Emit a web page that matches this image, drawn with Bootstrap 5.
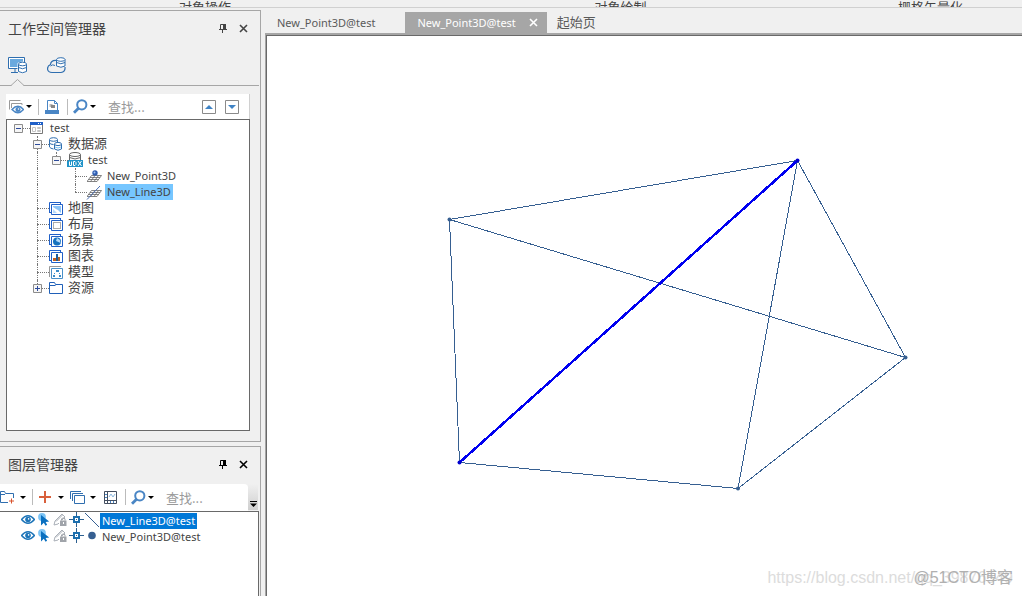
<!DOCTYPE html>
<html lang="zh-CN">
<head>
<meta charset="utf-8">
<meta name="viewport" content="width=device-width, initial-scale=1">
<title>工作空间管理器</title>
<link href="https://cdn.jsdelivr.net/npm/bootstrap@5.3.0/dist/css/bootstrap.min.css" rel="stylesheet">
<script src="https://cdn.jsdelivr.net/npm/bootstrap@5.3.0/dist/js/bootstrap.bundle.min.js"></script>
<style>
  body { background:#f0f0f0; color:#444; font:11px/16px "Noto Sans","Noto Sans CJK SC",sans-serif; }
  .cjk { font-family:"Noto Sans CJK SC",sans-serif; font-size:13px; }
  svg { display:block; flex:none; }
  button { border:0; background:none; padding:0; color:inherit; display:flex; align-items:center; flex:none; }
  .ribbon { display:grid; grid-template-columns:416fr 409fr 197fr; height:8px; border-bottom:1px solid #d0d0d0; overflow:hidden; }
  .ribbon-group { display:flex; align-items:flex-end; justify-content:center; line-height:14px; padding-bottom:3px; }
  .ribbon-group:first-child { padding-right:6px; }
  .ribbon-group:last-child { padding-left:14px; }
  .side { width:261px; flex:none; padding-top:2px; gap:4px; }
  .pane { border:1px solid #a6a6a6; border-left:0; min-height:0; display:flex; flex-direction:column; }
  .pane-top { flex:432 1 0; }
  .pane-bottom { flex:150 1 0; border-bottom:0; }
  .pane-title { height:36px; padding:0 12px 2px 8px; flex:none; }
  .pane-bottom .pane-title { height:37px; }
  .pane-title h2 { font-size:14px; line-height:20px; font-weight:400; margin:0; font-family:"Noto Sans CJK SC",sans-serif; }
  .dark { color:#000; }
  .views { position:relative; height:39px; padding:0 0 2px 8px; gap:20px; border-bottom:1px solid #a6a6a6; margin-right:1px; flex:none; }
  .views .notch { position:absolute; left:11px; bottom:-1px; }
  .tools { background:#fff; flex:none; }
  .tools-a { height:25px; margin:8px 10px 0 6px; padding-left:3px; border-right:1px solid #d0d0d0; }
  .tools-b { height:27px; margin-right:2px; background:#f0f0f0; }
  .tools-b .strip { background:#fff; border-radius:0 4px 0 0; min-width:0; }
  .sep { width:1px; height:16px; background:#bbb; flex:none; }
  .find { border:0; outline:0; padding:0; background:none; min-width:0; width:0; flex:1; height:20px; color:#444; margin-left:12px; }
  .find::placeholder { color:#999; opacity:1; }
  .more { width:10px; height:26px; background:linear-gradient(#f0f0f0,#cfcfcf); align-items:flex-end; justify-content:center; padding-bottom:3px; }
  .tree-box { border:1px solid #696969; background:#fff; margin:0 10px 10px 6px; padding-left:2px; flex:1; min-height:0; overflow:hidden; }
  .tree-box ul, .layers { list-style:none; margin:0; padding:0; }
  .node { display:flex; align-items:flex-start; height:16px; }
  .label { padding:0 2px; line-height:16px; white-space:nowrap; margin-left:1px; }
  .label.cjk { line-height:14px; padding:0 1px; }
  .picked { background:#76c6ff; }
  .cell { width:19px; height:16px; position:relative; flex:none; display:block; }
  .ln::before { content:""; position:absolute; left:9px; top:0; height:16px; border-left:1px dotted #777; }
  .half::before { height:8px; }
  .to::after { content:""; position:absolute; left:9px; right:-2px; top:8px; border-top:1px dotted #777; }
  .cell svg { position:absolute; left:5px; top:4px; z-index:1; }
  .layers { flex:1; background:#fff; border-top:1px solid #696969; border-right:1px solid #696969; margin-right:1px; padding-left:21px; }
  .layers li { display:flex; align-items:center; height:16px; }
  .layers .label { margin:2px 0 0 1px; }
  .chosen { background:#0078d7; color:#fff; }
  .docs { min-width:0; margin-left:4px; }
  .doc-tabs { height:25px; padding-top:4px; }
  .doc-tab { color:#5a5a5a; height:21px; }
  .doc-tab.cjk { padding-bottom:2px; }
  .doc-tab.on { background:#a6a6a6; color:#fff; }
  .paper { position:relative; border-top:2px solid #a6a6a6; border-left:1px solid #a6a6a6; flex:1; min-height:0; }
  .sheet { border-top:1px solid #696969; border-left:1px solid #696969; background:#fff; height:100%; }
  .credit { position:absolute; right:9px; bottom:8px; display:grid; justify-items:end; align-items:center; white-space:nowrap; }
  .credit span { grid-area:1/1; }
  .link-mark { font:16px/20px "Liberation Sans",sans-serif; color:#dcdcdc; }
  .blog-mark { font:16px/20px "Liberation Sans","Noto Sans CJK SC",sans-serif; color:#b0b0b0; }
</style>
</head>
<body class="vh-100 d-flex flex-column overflow-hidden">

<svg width="0" height="0" class="position-absolute" aria-hidden="true">
  <symbol id="drop" viewBox="0 0 6 3"><path d="M0 0h6L3 3z" fill="#000"/></symbol>
  <symbol id="pin" viewBox="0 0 8 9"><path d="M1.5 0.5h5v5h-5z" fill="none" stroke="currentColor"/><path d="M4 0h3v6H4zM0 5h8v1H0zM3 6h1v3H3z" fill="currentColor"/></symbol>
  <symbol id="shut" viewBox="0 0 9 9"><path d="M1 1l7 7M8 1L1 8" stroke="currentColor" stroke-width="1.6"/></symbol>
  <symbol id="lens" viewBox="0 0 15 15"><circle cx="8.8" cy="5.8" r="4.6" fill="none" stroke="#4a86c5" stroke-width="2"/><path d="M5.5 9.3L1 13.8" stroke="#4a86c5" stroke-width="2.8"/></symbol>
  <symbol id="minus" viewBox="0 0 9 9"><path d="M.5.5h8v8h-8z" fill="#f6f6f6" stroke="#8c8c8c"/><path d="M2 4.5h5" stroke="#2d4b9b"/></symbol>
  <symbol id="plus" viewBox="0 0 9 9"><path d="M.5.5h8v8h-8z" fill="#f6f6f6" stroke="#8c8c8c"/><path d="M2 4.5h5M4.5 2v5" stroke="#2d4b9b"/></symbol>
  <symbol id="pages" viewBox="0 0 14 13"><path d="M.5 10.500V.5h11" fill="none" stroke="#2060c8"/><path d="M11.500 0v2M0 10.500h2" stroke="#2060c8"/><path d="M2.500 2.500h11v10h-11z" fill="#fff" stroke="#2060c8"/></symbol>
  <symbol id="eye" viewBox="0 0 14 9"><path d="M.5 4.500Q7-3 13.500 4.500Q7 12 .5 4.500z" fill="#fff" stroke="#1c74b8" stroke-width="1.500"/><circle cx="7" cy="4.500" r="2.800" fill="#1c74b8"/><circle cx="7.600" cy="3.900" r=".8" fill="#fff"/></symbol>
  <symbol id="arrow" viewBox="0 0 12 13"><circle cx="4" cy="4" r="3.900" fill="#7cc4f5"/><path d="M3 2v10.500l2.800-2.700 1.800 3 1.500-1-1.500-2.800 3.600-.5z" fill="#0a70c0"/></symbol>
  <symbol id="editlock" viewBox="0 0 14 13"><path d="M1 12l1-4 7-7 3 3-3 3M1 12l4-1 1-1M3 8.500L9.500 2" fill="none" stroke="#aab0b8"/><path d="M7 7.500h6.500V13H7z" fill="#a0a4aa"/><path d="M8.500 7.500V5.800Q10.300 4 12 5.800v1.700" fill="none" stroke="#a0a4aa"/><path d="M10 9h1v2h-1z" fill="#fff"/></symbol>
  <symbol id="snap" viewBox="0 0 15 15"><path d="M7.500 0v15M0 7.500h15" stroke="#2c5f8f"/><path d="M5 5h5v5H5z" fill="#fff" stroke="#1c6fae" stroke-width="2"/><path d="M7 7h1v1H7z" fill="#2c5f8f"/></symbol>
  <symbol id="grid3d" viewBox="0 0 15 13"><path d="M4.500 6.500h10L10 12.500H0zM3 8.500h10M1.500 10.500h10M8 6.500L3.500 12.500M11.500 6.500L7 12.500" fill="none" stroke="#666" stroke-width=".8"/></symbol>
</svg>

<header class="ribbon cjk">
  <div class="ribbon-group">对象操作</div>
  <div class="ribbon-group">对象绘制</div>
  <div class="ribbon-group">栅格矢量化</div>
</header>

<div class="d-flex flex-grow-1" style="min-height:0">
  <aside class="side d-flex flex-column">
    <section class="pane pane-top">
      <div class="pane-title d-flex align-items-center">
        <h2 class="me-auto">工作空间管理器</h2>
        <button aria-label="固定" class="me-2"><svg width="8" height="9"><use href="#pin"/></svg></button>
        <button aria-label="关闭" class="ms-1"><svg width="9" height="9"><use href="#shut"/></svg></button>
      </div>
      <div class="views d-flex align-items-center">
        <button aria-label="工作空间"><svg width="19" height="17" viewBox="0 0 19 17"><path d="M.5.5h16v11H.5z" fill="#fff" stroke="#2f6eaf"/><path d="M2 2h13v8H2z" fill="#6aa9de"/><path d="M3 15.500h7M7 12v3" stroke="#2f6eaf"/><path d="M9.500 6q4.800-3 9.500 0v9q-4.800 3-9.500 0z" fill="#fff"/><path d="M10.500 7v7.500q4 2.500 8 0V7" fill="none" stroke="#2f6eaf"/><ellipse cx="14.500" cy="7" rx="4" ry="1.800" fill="#fff" stroke="#2f6eaf"/><path d="M10.500 10.500q4 2.500 8 0" fill="none" stroke="#2f6eaf"/></svg></button>
        <button aria-label="云数据"><svg width="19" height="17" viewBox="0 0 19 17"><path d="M9.500 3.500Q4 3 3.500 7.500Q.5 8.500.5 12Q1 15.500 5 15.500h9Q18.500 15 18 10" fill="none" stroke="#2f6eaf" stroke-width="1.200"/><path d="M3.500 9Q5.500 7 8 8.500" fill="none" stroke="#2f6eaf"/><path d="M9.500 2.500v6.500q4.500 2.500 8.500 0V2.500" fill="#fff" stroke="#2f6eaf"/><ellipse cx="13.800" cy="2.500" rx="4.200" ry="1.800" fill="#fff" stroke="#2f6eaf"/><path d="M9.500 5.500q4.500 2.500 8.500 0" fill="none" stroke="#2f6eaf"/></svg></button>
        <svg class="notch" width="13" height="7" viewBox="0 0 13 7"><path d="M0 7L6.500.5 13 7z" fill="#f0f0f0"/><path d="M0 6.500L6.500.5 13 6.500" fill="none" stroke="#a6a6a6"/></svg>
      </div>
      <div class="tools tools-a d-flex align-items-center">
        <button aria-label="显示" style="gap:2px"><svg width="15" height="14" viewBox="0 0 15 14"><path d="M.5 9.500V.5h11M2.500 8V3.500h10.500V5" fill="none" stroke="#999"/><path d="M3 9.500Q9 3 14.500 9.500Q9 16 3 9.500z" fill="#fff" stroke="#4a86c5" stroke-width="1.400"/><circle cx="9" cy="9.500" r="2.500" fill="#4a86c5"/><circle cx="9.500" cy="9" r=".8" fill="#fff"/></svg><svg width="6" height="3"><use href="#drop"/></svg></button>
        <span class="sep" style="margin:0 6px"></span>
        <button aria-label="保存"><svg width="14" height="14" viewBox="0 0 14 14"><path d="M2.500 10V.5h7l3 3V10" fill="#fff" stroke="#4a86c5"/><path d="M9.500.5v3h3" fill="none" stroke="#4a86c5"/><path d="M0 10h14v4H0z" fill="#4a86c5"/><path d="M4.500 4h3v3h-3z" fill="#bbb"/><path d="M6 5h4v3H6z" fill="#888"/></svg></button>
        <span class="sep ms-2" style="margin-right:5px"></span>
        <button aria-label="查找" style="gap:2px"><svg width="15" height="15"><use href="#lens"/></svg><svg width="6" height="3"><use href="#drop"/></svg></button>
        <input class="find cjk" type="text" placeholder="查找..." aria-label="查找">
        <button aria-label="上一个" style="margin-right:9px"><svg width="14" height="14" viewBox="0 0 14 14"><path d="M.5.500h13v13H.5z" fill="#fff" stroke="#8a8a8a"/><path d="M3 9h8L7 5z" fill="#3f83c5"/></svg></button>
        <button aria-label="下一个" style="margin-right:10px"><svg width="14" height="14" viewBox="0 0 14 14"><path d="M.5.500h13v13H.5z" fill="#fff" stroke="#8a8a8a"/><path d="M3 5h8L7 9z" fill="#3f83c5"/></svg></button>
      </div>
      <div class="tree-box">
        <ul>
          <li class="node"><span class="cell to"><svg width="9" height="9"><use href="#minus"/></svg></span>
            <svg width="19" height="16" viewBox="0 0 19 16"><path d="M2.500 2.500h12v11h-12z" fill="#fff" stroke="#777"/><path d="M2 2h13v3H2z" fill="#2060c8"/><path d="M10 3h1v1h-1zM12 3h1v1h-1z" fill="#fff"/><path d="M4.500 7.500h3v4h-3zM9.500 7.500h3v1h-3zM9.500 10.500h3v1h-3z" fill="none" stroke="#c4c4c4"/></svg><span class="label">test</span></li>
          <li class="node"><span class="cell"></span><span class="cell ln to"><svg width="9" height="9"><use href="#minus"/></svg></span>
            <svg width="19" height="16" viewBox="0 0 19 16"><g fill="#fff" stroke="#2f6eaf"><path d="M2.500 4v7q1 1.500 4 2M10.500 4v2" fill="none"/><ellipse cx="6.500" cy="3.500" rx="4" ry="1.800"/><path d="M2.500 7q1 1.500 4 1.500" fill="none"/><path d="M7.500 8v5q3.500 2.500 7 0V8"/><ellipse cx="11" cy="8" rx="3.500" ry="1.600"/></g><path d="M8 11q3 2 6 0" fill="none" stroke="#7cc4f5"/></svg><span class="label cjk">数据源</span></li>
          <li class="node"><span class="cell"></span><span class="cell ln"></span><span class="cell ln half to"><svg width="9" height="9"><use href="#minus"/></svg></span>
            <svg width="19" height="16" viewBox="0 0 19 16"><path d="M3.500 2.500v7h11v-7" fill="#fff" stroke="#666"/><ellipse cx="9" cy="2.500" rx="5.500" ry="2" fill="#fff" stroke="#666"/><path d="M3.500 5.500q5.500 3 11 0" fill="none" stroke="#666"/><path d="M1 8h16v7H1z" fill="#2093c8"/><path d="M3.500 9.500v4h2v-4M7.500 9.500v4h1.500l1-1v-2l-1-1zM12 9l3.500 5M15.500 9L12 14" fill="none" stroke="#fff"/></svg><span class="label">test</span></li>
          <li class="node"><span class="cell"></span><span class="cell ln"></span><span class="cell"></span><span class="cell ln to"></span>
            <svg width="19" height="16" viewBox="0 0 19 16"><use href="#grid3d" x="2" y="1" width="15" height="13"/><circle cx="10" cy="5" r="2.700" fill="#2f5db0"/><circle cx="9.500" cy="4.500" r="1" fill="#9cc0f0"/></svg><span class="label">New_Point3D</span></li>
          <li class="node"><span class="cell"></span><span class="cell ln"></span><span class="cell"></span><span class="cell ln half to"></span>
            <svg width="19" height="16" viewBox="0 0 19 16"><use href="#grid3d" x="2" y="0" width="15" height="13"/><path d="M2 15.500L15 2" stroke="#4a6fb5"/></svg><span class="label picked">New_Line3D</span></li>
          <li class="node"><span class="cell"></span><span class="cell ln to"></span>
            <svg width="19" height="16" viewBox="0 0 19 16"><use href="#pages" x="2" y="2" width="14" height="13"/><path d="M6 6h8v7l-3-3-2-1-3-2z" fill="#8cc4f8"/><path d="M6 9l4 4H6z" fill="#b5dafc"/></svg><span class="label cjk">地图</span></li>
          <li class="node"><span class="cell"></span><span class="cell ln to"></span>
            <svg width="19" height="16" viewBox="0 0 19 16"><use href="#pages" x="2" y="2" width="14" height="13"/><path d="M6.500 6.500h7v6h-7z" fill="none" stroke="#555" stroke-dasharray="1 1"/></svg><span class="label cjk">布局</span></li>
          <li class="node"><span class="cell"></span><span class="cell ln to"></span>
            <svg width="19" height="16" viewBox="0 0 19 16"><use href="#pages" x="2" y="2" width="14" height="13"/><circle cx="10" cy="9.500" r="4" fill="#1672be"/><path d="M9 9l1-3 3 2 .5 3-2-1z" fill="#b5dafc"/></svg><span class="label cjk">场景</span></li>
          <li class="node"><span class="cell"></span><span class="cell ln to"></span>
            <svg width="19" height="16" viewBox="0 0 19 16"><use href="#pages" x="2" y="2" width="14" height="13"/><path d="M6 10h3v3H6z" fill="#c06020"/><path d="M9 6h2v7H9z" fill="#1c5c9c"/><path d="M11 9h2v4h-2z" fill="#b0662c"/></svg><span class="label cjk">图表</span></li>
          <li class="node"><span class="cell"></span><span class="cell ln to"></span>
            <svg width="19" height="16" viewBox="0 0 19 16"><path d="M2.500 13V2.500H14" fill="none" stroke="#999"/><path d="M4.500 4.500h11v10h-11z" fill="#fff" stroke="#4a90c8"/><path d="M9 6h3v2H9zM6 11h2v2H6zM12 11h2v2h-2zM7 9h1v1H7zM12 9h1v1h-1z" fill="#3c8cc8"/></svg><span class="label cjk">模型</span></li>
          <li class="node"><span class="cell"></span><span class="cell ln half to"><svg width="9" height="9"><use href="#plus"/></svg></span>
            <svg width="19" height="16" viewBox="0 0 19 16"><path d="M2.500 13.500v-11h5l1 2h7v9zM2.500 5.500h6" fill="#fff" stroke="#2060b8"/></svg><span class="label cjk">资源</span></li>
        </ul>
      </div>
    </section>

    <section class="pane pane-bottom">
      <div class="pane-title d-flex align-items-center">
        <h2 class="me-auto">图层管理器</h2>
        <button aria-label="固定" class="me-2 dark"><svg width="8" height="9"><use href="#pin"/></svg></button>
        <button aria-label="关闭" class="ms-1 dark"><svg width="9" height="9"><use href="#shut"/></svg></button>
      </div>
      <div class="tools tools-b d-flex">
        <div class="strip d-flex align-items-center flex-grow-1">
          <button aria-label="新建分组" style="gap:6px"><svg width="14" height="14" viewBox="0 0 14 14"><path d="M8 12.500H.5V1.500h4l1 2h8V8M0 4.500h5" fill="none" stroke="#2f6eaf"/><path d="M11.500 8.500v5M9 11h5" stroke="#d9532c"/></svg><svg width="6" height="3"><use href="#drop"/></svg></button>
          <span class="sep" style="margin:0 6px"></span>
          <button aria-label="添加" style="gap:7px"><svg width="12" height="12" viewBox="0 0 12 12"><path d="M6 0v12M0 6h12" stroke="#d9603c" stroke-width="2"/></svg><svg width="6" height="3"><use href="#drop"/></svg></button>
          <button aria-label="图层" style="gap:5px;margin-left:6px"><svg width="15" height="13" viewBox="0 0 15 13"><path d="M.5 8V.5H11M2.500 10V2.500H13M4.500 4.500h10v8h-10z" fill="none" stroke="#2f6eaf"/></svg><svg width="6" height="3"><use href="#drop"/></svg></button>
          <button aria-label="属性" class="ms-2"><svg width="13" height="13" viewBox="0 0 13 13"><path d="M.5.5h12v12H.5zM3.500 0v13M0 9.500h13" fill="none" stroke="#444f60"/><path d="M1 3.500h2M1 6.500h2M6.500 10v2M9.500 10v2" stroke="#4a86c5"/><path d="M5 6l2-3 2 3 2-3" fill="none" stroke="#8cb8e0"/></svg></button>
          <span class="sep ms-2" style="margin-right:5px"></span>
          <button aria-label="查找" style="gap:2px"><svg width="15" height="15"><use href="#lens"/></svg><svg width="6" height="3"><use href="#drop"/></svg></button>
          <input class="find cjk" type="text" placeholder="查找..." aria-label="查找图层">
        </div>
        <button class="more" aria-label="更多"><svg width="7" height="6" viewBox="0 0 7 6"><path d="M0 0h7v1H0zM0 2.500h7L3.500 6z" fill="#000"/></svg></button>
      </div>
      <ul class="layers">
        <li><svg width="14" height="9"><use href="#eye"/></svg><svg width="12" height="13" style="margin-left:3px"><use href="#arrow"/></svg><svg width="14" height="13" style="margin:0 2px 0 3px"><use href="#editlock"/></svg><svg width="15" height="15"><use href="#snap"/></svg><svg width="15" height="16" viewBox="0 0 15 16"><path d="M1 1l14 14" stroke="#365f91"/></svg><span class="label chosen">New_Line3D@test</span></li>
        <li><svg width="14" height="9"><use href="#eye"/></svg><svg width="12" height="13" style="margin-left:3px"><use href="#arrow"/></svg><svg width="14" height="13" style="margin:0 2px 0 3px"><use href="#editlock"/></svg><svg width="15" height="15"><use href="#snap"/></svg><svg width="15" height="16" viewBox="0 0 15 16"><circle cx="8" cy="7.500" r="3.800" fill="#365f91"/></svg><span class="label">New_Point3D@test</span></li>
      </ul>
    </section>
  </aside>

  <main class="docs d-flex flex-column flex-grow-1">
    <div class="doc-tabs d-flex">
      <button class="doc-tab" style="padding:0 30px 0 12px">New_Point3D@test</button>
      <div class="doc-tab on d-flex align-items-center" style="padding:0 9px 0 12px;gap:13px"><button>New_Point3D@test</button><button aria-label="关闭标签"><svg width="9" height="9"><use href="#shut"/></svg></button></div>
      <button class="doc-tab cjk px-2" style="margin-left:2px">起始页</button>
    </div>
    <div class="paper">
      <div class="sheet">
        <svg width="100%" height="100%" aria-label="New_Line3D">
          <g transform="translate(-267 -36)" fill="none" stroke="#365f91" shape-rendering="crispEdges">
            <path d="M449.500 219.500L797.500 160.500L905.500 357.500L738 488.500L459.500 462.500ZM449.500 219.500L905.500 357.500M797.500 160.500L738 488.500"/>
            <path d="M797.500 160.500L459.500 462.500" stroke="#0000f0" stroke-width="2.500"/>
          </g>
          <g transform="translate(-267 -36)" fill="#365f91">
            <circle cx="449.500" cy="219.500" r="2"/><circle cx="905.500" cy="357.500" r="2"/><circle cx="738" cy="488.500" r="2"/>
            <g fill="#0000d0"><circle cx="797.500" cy="160.500" r="2"/><circle cx="459.500" cy="462.500" r="2"/></g>
          </g>
        </svg>
      </div>
      <div class="credit"><span class="link-mark">https://blog.csdn.net/qq_39876549</span><span class="blog-mark">@51CTO博客</span></div>
    </div>
  </main>
</div>
</body>
</html>
